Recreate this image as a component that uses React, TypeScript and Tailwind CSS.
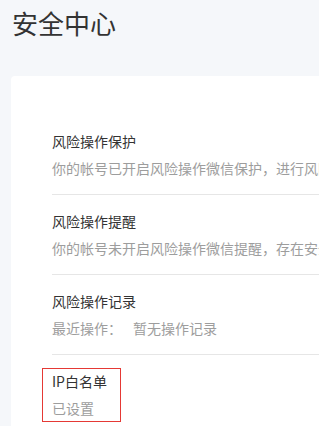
import type { ReactNode } from 'react'

const items: { title: string; desc: ReactNode }[] = [
  { title: '风险操作保护', desc: '你的帐号已开启风险操作微信保护，进行风险操作时需要微信确认' },
  { title: '风险操作提醒', desc: '你的帐号未开启风险操作微信提醒，存在安全隐患' },
  {
    title: '风险操作记录',
    desc: (
      <>
        <span className="inline-block w-[81px]">最近操作：</span>暂无操作记录
      </>
    ),
  },
]

export default function App() {
  return (
    <div
      className="min-h-[426px] w-[319px] overflow-hidden bg-[#f5f7fa] pl-[11px]"
      style={{ fontFamily: '"Noto Sans CJK SC", "Noto Sans", sans-serif' }}
    >
      {/* page title */}
      <h1 className="pl-px pt-[5px] text-[26px] leading-[36px] text-[#333] whitespace-nowrap">
        安全中心
      </h1>

      {/* settings card */}
      <div className="mt-[35px] w-[400px] rounded-tl-[4px] bg-white pl-[41px] pt-[39px] pb-[20px]">
        {items.map((item) => (
          <div key={item.title} className="border-b border-[#e6e6e6] py-[15px]">
            <div className="text-[14px] leading-[22px] text-[#333] whitespace-nowrap">{item.title}</div>
            <div className="mt-[5px] text-[14px] leading-[22px] text-[#9d9d9d] whitespace-nowrap">
              {item.desc}
            </div>
          </div>
        ))}

        {/* IP whitelist, highlighted */}
        <div className="-ml-[10px] mt-[13px] w-[79px] border border-[#e53935] pt-px pl-[9px] pb-[2px]">
          <div className="text-[14px] leading-[22px] text-[#333] whitespace-nowrap">IP白名单</div>
          <div className="mt-[5px] text-[14px] leading-[22px] text-[#9d9d9d] whitespace-nowrap">已设置</div>
        </div>
      </div>
    </div>
  )
}
